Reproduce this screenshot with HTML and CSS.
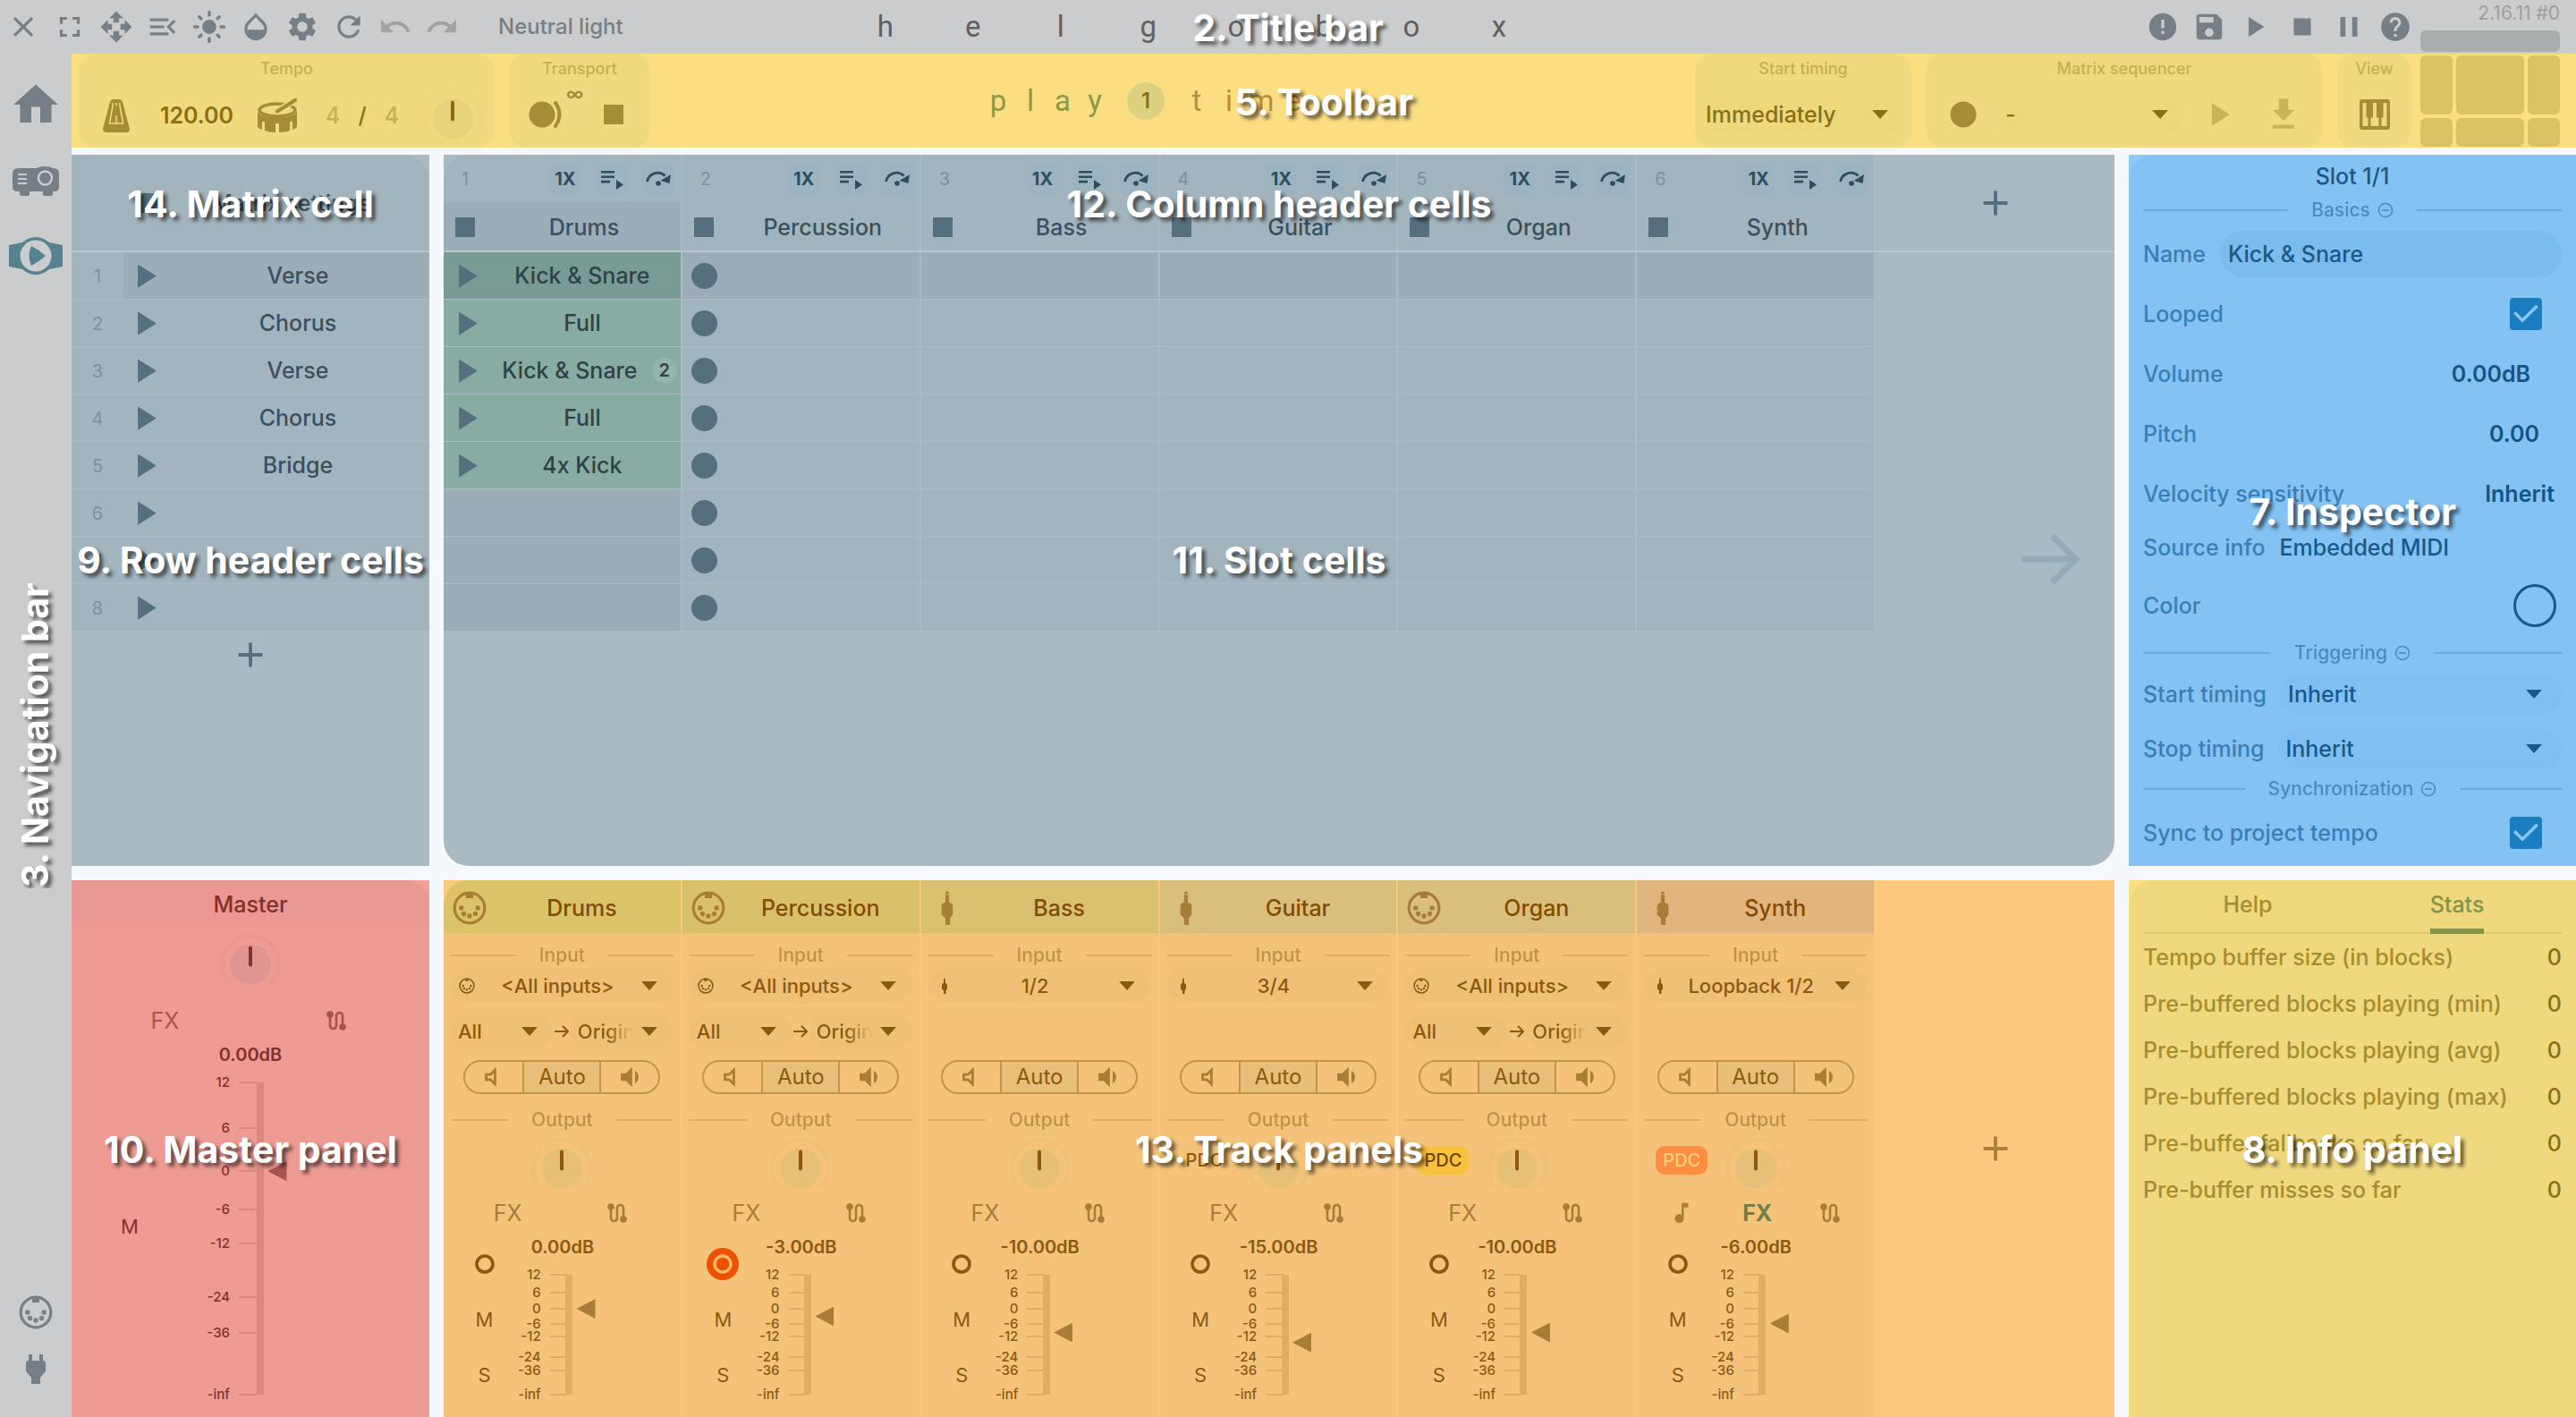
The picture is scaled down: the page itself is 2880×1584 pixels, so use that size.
FILE: index.html
```html
<!DOCTYPE html>
<html lang="en">
<head>
<meta charset="utf-8">
<title>Helgobox – Playtime</title>
<meta name="viewport" content="width=device-width, initial-scale=1">
<link rel="stylesheet" href="styles.css">
</head>
<body>
<svg class="defs" aria-hidden="true">
  <symbol id="i-close" viewBox="0 0 24 24"><path d="M19 6.41L17.59 5 12 10.59 6.41 5 5 6.41 10.59 12 5 17.59 6.41 19 12 13.41 17.59 19 19 17.59 13.41 12z"/></symbol>
  <symbol id="i-full" viewBox="0 0 24 24"><path d="M7 14H5v5h5v-2H7v-3zm-2-4h2V7h3V5H5v5zm12 7h-3v2h5v-5h-2v3zM14 5v2h3v3h2V5h-5z"/></symbol>
  <symbol id="i-move" viewBox="0 0 24 24"><path d="M10 9h4V6h3l-5-5-5 5h3v3zm-1 1H6V7l-5 5 5 5v-3h3v-4zm14 2l-5-5v3h-3v4h3v3l5-5zm-9 3h-4v3H7l5 5 5-5h-3v-3z"/></symbol>
  <symbol id="i-menu" viewBox="0 0 24 24"><path d="M3 18h13v-2H3v2zM3 6v2h13V6H3zm0 7h10v-2H3v2zm18 2.59L17.42 12 21 8.41 19.59 7l-5 5 5 5L21 15.59z"/></symbol>
  <symbol id="i-sun" viewBox="0 0 24 24"><circle cx="12" cy="12" r="5"/><path d="M12 1.6v2.2M12 20.2v2.2M1.6 12h2.2M20.2 12h2.2M4.9 4.9l1.3 1.3M17.8 17.8l1.3 1.3M4.9 19.1l1.3-1.3M17.8 6.2l1.3-1.3" fill="none" stroke="currentColor" stroke-width="2.2" stroke-linecap="round"/></symbol>
  <symbol id="i-drop" viewBox="0 0 24 24"><path d="M17.66 8L12 2.35 6.34 8C4.78 9.56 4 11.64 4 13.64s.78 4.11 2.34 5.67 3.61 2.35 5.66 2.35 4.1-.79 5.66-2.35S20 15.64 20 13.64 19.22 9.56 17.66 8zM6 14c.01-2 .62-3.27 1.76-4.4L12 5.27l4.24 4.38C17.38 10.77 17.99 12 18 14H6z"/></symbol>
  <symbol id="i-gear" viewBox="0 0 24 24"><path d="M19.14 12.94c.04-.3.06-.61.06-.94 0-.32-.02-.64-.07-.94l2.03-1.58c.18-.14.23-.41.12-.61l-1.92-3.32c-.12-.22-.37-.29-.59-.22l-2.39.96c-.5-.38-1.03-.7-1.62-.94l-.36-2.54c-.04-.24-.24-.41-.48-.41h-3.84c-.24 0-.43.17-.47.41l-.36 2.54c-.59.24-1.13.57-1.62.94l-2.39-.96c-.22-.08-.47 0-.59.22L2.74 8.87c-.12.21-.08.47.12.61l2.03 1.58c-.05.3-.09.63-.09.94s.02.64.07.94l-2.03 1.58c-.18.14-.23.41-.12.61l1.92 3.32c.12.22.37.29.59.22l2.39-.96c.5.38 1.03.7 1.62.94l.36 2.54c.05.24.24.41.48.41h3.84c.24 0 .44-.17.47-.41l.36-2.54c.59-.24 1.13-.56 1.62-.94l2.39.96c.22.08.47 0 .59-.22l1.92-3.32c.12-.22.07-.47-.12-.61l-2.01-1.58zM12 15.6c-1.98 0-3.6-1.62-3.6-3.6s1.62-3.6 3.6-3.6 3.6 1.62 3.6 3.6-1.62 3.6-3.6 3.6z"/></symbol>
  <symbol id="i-refresh" viewBox="0 0 24 24"><path d="M17.65 6.35C16.2 4.9 14.21 4 12 4c-4.42 0-7.99 3.58-7.99 8s3.57 8 7.99 8c3.73 0 6.84-2.55 7.73-6h-2.08c-.82 2.33-3.04 4-5.65 4-3.31 0-6-2.69-6-6s2.69-6 6-6c1.66 0 3.14.69 4.22 1.78L13 11h7V4l-2.35 2.35z"/></symbol>
  <symbol id="i-undo" viewBox="0 0 24 24"><path d="M12.5 8c-2.65 0-5.05.99-6.9 2.6L2 7v9h9l-3.62-3.62c1.39-1.16 3.16-1.88 5.12-1.88 3.54 0 6.55 2.31 7.6 5.5l2.37-.78C21.08 11.03 17.15 8 12.5 8z"/></symbol>
  <symbol id="i-redo" viewBox="0 0 24 24"><path d="M18.4 10.6C16.55 8.99 14.15 8 11.5 8c-4.65 0-8.58 3.03-9.96 7.22L3.9 16c1.05-3.19 4.05-5.5 7.6-5.5 1.95 0 3.73.72 5.12 1.88L13 16h9V7l-3.6 3.6z"/></symbol>
  <symbol id="i-alert" viewBox="0 0 24 24"><path d="M12 2.400C6.700 2.400 2.400 6.700 2.400 12s4.300 9.600 9.600 9.600 9.600-4.300 9.600-9.600S17.300 2.400 12 2.400zm1 14.600h-2v-2h2v2zm0-4h-2V7h2v6z"/></symbol>
  <symbol id="i-save" viewBox="0 0 24 24"><path d="M17 3H5c-1.110 0-2 .9-2 2v14c0 1.100.890 2 2 2h14c1.100 0 2-.9 2-2V7l-4-4zm-5 16c-1.660 0-3-1.340-3-3s1.340-3 3-3 3 1.340 3 3-1.340 3-3 3zm3-10H5V5h10v4z"/></symbol>
  <symbol id="i-play" viewBox="0 0 24 24"><path d="M7 5v14l11-7z"/></symbol>
  <symbol id="i-stop" viewBox="0 0 24 24"><path d="M6 6h12v12H6z"/></symbol>
  <symbol id="i-pause" viewBox="0 0 24 24"><path d="M6 5h3.600v14H6zM14.400 5H18v14h-3.600z"/></symbol>
  <symbol id="i-help" viewBox="0 0 24 24"><path d="M12 2C6.480 2 2 6.480 2 12s4.480 10 10 10 10-4.480 10-10S17.520 2 12 2zm1 17h-2v-2h2v2zm2.070-7.750l-.9.920C13.450 12.900 13 13.500 13 15h-2v-.5c0-1.100.450-2.100 1.170-2.830l1.240-1.260c.370-.360.590-.860.590-1.410 0-1.100-.9-2-2-2s-2 .9-2 2H8c0-2.210 1.790-4 4-4s4 1.790 4 4c0 .880-.360 1.680-.930 2.250z"/></symbol>
  <symbol id="i-home" viewBox="0 0 24 24"><path d="M10 20v-7h4v7h5v-8h3L12 3 2 12h3v8z"/></symbol>
  <symbol id="i-projector" viewBox="0 0 52 34"><path d="M6 2H27Q30 0 36 0Q42 0 45 2H47Q52 3 52 8V23Q52 28 47 28H45V31Q45 33 43 33H36Q34 33 34 31V28H19V31Q19 33 17 33H10Q8 33 8 31V28H5Q0 28 0 23V8Q0 2 6 2z"/><circle cx="36.500" cy="13" r="7.500" fill="none" stroke="var(--bg)" stroke-width="2.400"/><path d="M6 9h10M6 14h10M6 19h10" stroke="var(--bg)" stroke-width="2.200"/></symbol>
  <symbol id="i-playtime" viewBox="0 0 60 42"><path d="M0 9L15 6Q22 0 30 0T45 6L60 9V33L45 36Q38 42 30 42T15 36L0 33z"/><circle cx="30" cy="21" r="17.500" fill="var(--bg)"/><path d="M25 10Q33 14 41 21Q33 28 25 32Q20 21 25 10z"/></symbol>
  <symbol id="i-midi" viewBox="0 0 38 38"><circle cx="19" cy="19" r="16.800" fill="none" stroke="currentColor" stroke-width="3.200"/><path d="M15 2.500h8v5.500h-8z"/><circle cx="9.800" cy="19" r="2.700"/><circle cx="28.200" cy="19" r="2.700"/><circle cx="12.500" cy="25.500" r="2.700"/><circle cx="25.500" cy="25.500" r="2.700"/><circle cx="19" cy="28" r="2.700"/></symbol>
  <symbol id="i-plug" viewBox="0 0 24 34"><path d="M4 0h4v7h8V0h4v7q3 0 3 3v9l-6 7v7H7v-7l-6-7v-9q0-3 3-3z"/></symbol>
  <symbol id="i-jack" viewBox="0 0 12 36"><path d="M6 0l2 2v1H4V2zM4 4h4v8q4 1 4 4v9l-3 4v7H4v-7l-4-4v-9q0-3 4-4z"/></symbol>
  <symbol id="i-metronome" viewBox="0 0 30 37"><path d="M8 3Q9 0 12 0h6q3 0 4 3l8 30q0 4-4 4H4q-4 0-4-4z"/><path d="M11.500 4L7.500 27h15L18.500 4M15 4v3M15 18v9" fill="none" stroke="var(--bg)" stroke-width="1.500"/></symbol>
  <symbol id="i-drum" viewBox="0 0 44 38"><path d="M0 13q0 8 22 8t22-8v19q0 1-5 3v-9h-3v10q-5 2-12 2v-10h-4v10q-7 0-12-2V26H5v9q-5-2-5-3z"/><ellipse cx="22" cy="13" rx="20" ry="7" fill="none" stroke="currentColor" stroke-width="3.500"/><path d="M24 13L42 2" stroke="var(--bg)" stroke-width="7"/><path d="M22 14.500L42 2" stroke="currentColor" stroke-width="4.400" stroke-linecap="round"/></symbol>
  <symbol id="i-knob" viewBox="0 0 72 72"><path d="M13.400 62.600a32 32 0 1 1 45.200 0" fill="none" stroke="var(--ring)" stroke-width="4"/><circle cx="36" cy="40" r="22.500" fill="var(--disc)"/><path d="M36 21.500v19" stroke="var(--needle)" stroke-width="4" stroke-linecap="round"/></symbol>
  <symbol id="i-recplay" viewBox="0 0 42 32"><circle cx="15" cy="16" r="14.500"/><path d="M30 3q9 13 0 26" fill="none" stroke="currentColor" stroke-width="4" stroke-linecap="round"/></symbol>
  <symbol id="i-dot" viewBox="0 0 30 30"><circle cx="15" cy="15" r="14.500"/></symbol>
  <symbol id="i-down" viewBox="0 0 24 24"><path d="M19 9h-4V2H9v7H5l7 7 7-7zM5 18.500v2.500h14v-2.500z"/></symbol>
  <symbol id="i-piano" viewBox="0 0 34 34"><path fill-rule="evenodd" d="M3 0h28q3 0 3 3v28q0 3-3 3H3q-3 0-3-3V3q0-3 3-3zM3.500 4v26h6V20.500H7.500V4zM12.500 30h9V20.500h-2.500V4h-4v16.500h-2.500zM24.500 30h6V4h-4v16.500h-2z"/></symbol>
  <symbol id="i-queue" viewBox="0 0 28 28"><path d="M2 5h15v2.600H2zM2 10.400h15V13H2zM2 15.800h10v2.600H2zM19 15v11l8-5.500z"/></symbol>
  <symbol id="i-step" viewBox="0 0 28 28"><path d="M1.500 17a12 12 0 0 1 20-6.500" fill="none" stroke="currentColor" stroke-width="2.800"/><path d="M28 9l-1.500 10L16.500 16z"/><circle cx="14" cy="19" r="2.800"/></symbol>
  <symbol id="i-add" viewBox="0 0 24 24"><path d="M19 13h-6v6h-2v-6H5v-2h6V5h2v6h6v2z"/></symbol>
  <symbol id="i-arrow" viewBox="0 0 66 58"><path d="M0 29h60M34 3l27 26-27 26" fill="none" stroke="currentColor" stroke-width="7"/></symbol>
  <symbol id="i-to" viewBox="0 0 16 14"><path d="M0 7h14M9 1l6 6-6 6" fill="none" stroke="currentColor" stroke-width="2"/></symbol>
  <symbol id="i-caret" viewBox="0 0 16 9"><path d="M0 0h16L8 9z"/></symbol>
  <symbol id="i-minus" viewBox="0 0 18 18"><circle cx="9" cy="9" r="7.500" fill="none" stroke="currentColor" stroke-width="1.600"/><path d="M5 8.200h8v1.600H5z"/></symbol>
  <symbol id="i-mute" viewBox="0 0 24 24"><path d="M5 9v6h4l5 5V4L9 9H5zm7-.17v6.340L9.830 13H7v-2h2.830L12 8.830z"/></symbol>
  <symbol id="i-vol" viewBox="0 0 24 24"><path d="M19 12c0-2.300-1.020-4-2.800-5v10c1.780-1 2.800-2.700 2.800-5zM5 9v6h4l5 5V4L9 9H5z"/></symbol>
  <symbol id="i-route" viewBox="0 0 22 22"><path d="M4 4v12.500a3.500 3.500 0 0 0 7 0v-11a3.500 3.500 0 0 1 7 0V18" fill="none" stroke="currentColor" stroke-width="2.600"/><circle cx="4" cy="4" r="3.800"/><circle cx="18" cy="18" r="3.800"/></symbol>
  <symbol id="i-note" viewBox="0 0 24 24"><path d="M12 3v10.550c-.590-.340-1.270-.550-2-.550-2.210 0-4 1.790-4 4s1.790 4 4 4 4-1.790 4-4V7h4V3h-6z"/></symbol>
  <symbol id="i-arm" viewBox="0 0 36 36"><circle cx="18" cy="18" r="9" fill="none" stroke="currentColor" stroke-width="3.600"/></symbol>
  <symbol id="i-armed" viewBox="0 0 36 36"><circle cx="18" cy="18" r="18" fill="#ed5103"/><circle cx="18" cy="18" r="9" fill="none" stroke="#fcb862" stroke-width="3.400"/></symbol>
</svg>

<header class="titlebar">
  <div class="tools">
    <button aria-label="Close"><svg><use href="#i-close"/></svg></button>
    <button aria-label="Full screen"><svg><use href="#i-full"/></svg></button>
    <button aria-label="Move"><svg><use href="#i-move"/></svg></button>
    <button aria-label="Menu"><svg><use href="#i-menu"/></svg></button>
    <button aria-label="Brightness"><svg><use href="#i-sun"/></svg></button>
    <button aria-label="Opacity"><svg><use href="#i-drop"/></svg></button>
    <button aria-label="Settings"><svg><use href="#i-gear"/></svg></button>
    <button aria-label="Refresh"><svg><use href="#i-refresh"/></svg></button>
    <button aria-label="Undo" class="off"><svg><use href="#i-undo"/></svg></button>
    <button aria-label="Redo" class="off"><svg><use href="#i-redo"/></svg></button>
  </div>
  <span class="theme">Neutral light</span>
  <h1 class="wordmark"><span>h</span><span>e</span><span>l</span><span>g</span><span>o</span><span>b</span><span>o</span><span>x</span></h1>
  <div class="tools">
    <button aria-label="Alerts"><svg><use href="#i-alert"/></svg></button>
    <button aria-label="Save"><svg><use href="#i-save"/></svg></button>
    <button aria-label="Play"><svg><use href="#i-play"/></svg></button>
    <button aria-label="Stop"><svg><use href="#i-stop"/></svg></button>
    <button aria-label="Pause"><svg><use href="#i-pause"/></svg></button>
    <button aria-label="Help"><svg><use href="#i-help"/></svg></button>
  </div>
  <div class="version"><span>2.16.11 #0</span><i></i></div>
  <strong class="tag">2. Title bar</strong>
</header>

<div class="shell">
<nav class="nav">
  <a href="#home" aria-label="Home"><svg class="w60"><use href="#i-home"/></svg></a>
  <a href="#projector" aria-label="Projection"><svg class="w52"><use href="#i-projector"/></svg></a>
  <a href="#playtime" aria-label="Playtime" class="current"><svg class="w60 h42"><use href="#i-playtime"/></svg></a>
  <a href="#midi" aria-label="MIDI" class="push"><svg class="w38"><use href="#i-midi"/></svg></a>
  <a href="#plug" aria-label="Plug-ins"><svg class="w24"><use href="#i-plug"/></svg></a>
  <strong class="tag side">3. Navigation bar</strong>
</nav>

<main class="main">
<section class="toolbar">
  <div class="group"><h2>Tempo</h2>
    <div class="tempo">
      <button aria-label="Metronome"><svg class="metro"><use href="#i-metronome"/></svg></button>
      <b>120.00</b>
      <button aria-label="Count-in"><svg class="drum"><use href="#i-drum"/></svg></button>
      <span class="dim">4</span><span>/</span><span class="dim">4</span>
      <svg class="knob" role="img" aria-label="Tempo knob"><use href="#i-knob"/></svg>
    </div>
  </div>
  <div class="group"><h2>Transport</h2>
    <div class="transport">
      <button aria-label="Record"><svg class="recplay"><use href="#i-recplay"/></svg></button>
      <span class="inf">∞</span>
      <button aria-label="Stop"><i class="square"></i></button>
    </div>
  </div>
  <div class="playmark"><span>p</span><span>l</span><span>a</span><span>y</span><b>1</b><span class="t">t</span><span class="t">i</span><span class="t">m</span><span class="t">e</span></div>
  <div class="group timing"><h2>Start timing</h2>
    <div class="ctl"><label class="sel"><select aria-label="Start timing"><option>Immediately</option></select><svg><use href="#i-caret"/></svg></label></div>
  </div>
  <div class="group seq"><h2>Matrix sequencer</h2>
    <div class="ctl">
      <button aria-label="Record sequence"><svg class="dot"><use href="#i-dot"/></svg></button>
      <label class="sel"><select aria-label="Sequence"><option>-</option></select><svg><use href="#i-caret"/></svg></label>
      <button aria-label="Play sequence" class="faint"><svg class="w44"><use href="#i-play"/></svg></button>
      <button aria-label="Export" class="faint"><svg class="w40"><use href="#i-down"/></svg></button>
    </div>
  </div>
  <div class="group view"><h2>View</h2>
    <div class="ctl"><button aria-label="Piano"><svg class="w34"><use href="#i-piano"/></svg></button></div>
  </div>
  <div class="minimap"><i></i><i></i><i></i><i></i><i></i><i></i></div>
  <strong class="tag">5. Toolbar</strong>
</section>

<div class="deck">
<section class="rows">
  <div class="corner">
    <div class="cellbar"><button aria-label="Stop all"><i class="square"></i></button><span>Matrix settings</span></div>
    <strong class="tag">14. Matrix cell</strong>
  </div>
  <div class="rowlist">
    <div class="row on"><em>1</em><div><svg><use href="#i-play"/></svg><span>Verse</span></div></div>
    <div class="row"><em>2</em><div><svg><use href="#i-play"/></svg><span>Chorus</span></div></div>
    <div class="row"><em>3</em><div><svg><use href="#i-play"/></svg><span>Verse</span></div></div>
    <div class="row"><em>4</em><div><svg><use href="#i-play"/></svg><span>Chorus</span></div></div>
    <div class="row"><em>5</em><div><svg><use href="#i-play"/></svg><span>Bridge</span></div></div>
    <div class="row"><em>6</em><div><svg><use href="#i-play"/></svg></div></div>
    <div class="row"><em>7</em><div><svg><use href="#i-play"/></svg></div></div>
    <div class="row"><em>8</em><div><svg><use href="#i-play"/></svg></div></div>
    <button class="add" aria-label="Add row"><svg><use href="#i-add"/></svg></button>
    <strong class="tag">9. Row header cells</strong>
  </div>
</section>

<section class="matrix">
  <div class="cols">
    <div class="col on"><div class="top"><em>1</em><button>1X</button><button aria-label="Queue"><svg><use href="#i-queue"/></svg></button><button aria-label="Step"><svg><use href="#i-step"/></svg></button></div><div class="name"><i class="square"></i><span>Drums</span></div></div>
    <div class="col"><div class="top"><em>2</em><button>1X</button><button aria-label="Queue"><svg><use href="#i-queue"/></svg></button><button aria-label="Step"><svg><use href="#i-step"/></svg></button></div><div class="name"><i class="square"></i><span>Percussion</span></div></div>
    <div class="col"><div class="top"><em>3</em><button>1X</button><button aria-label="Queue"><svg><use href="#i-queue"/></svg></button><button aria-label="Step"><svg><use href="#i-step"/></svg></button></div><div class="name"><i class="square"></i><span>Bass</span></div></div>
    <div class="col"><div class="top"><em>4</em><button>1X</button><button aria-label="Queue"><svg><use href="#i-queue"/></svg></button><button aria-label="Step"><svg><use href="#i-step"/></svg></button></div><div class="name"><i class="square"></i><span>Guitar</span></div></div>
    <div class="col"><div class="top"><em>5</em><button>1X</button><button aria-label="Queue"><svg><use href="#i-queue"/></svg></button><button aria-label="Step"><svg><use href="#i-step"/></svg></button></div><div class="name"><i class="square"></i><span>Organ</span></div></div>
    <div class="col"><div class="top"><em>6</em><button>1X</button><button aria-label="Queue"><svg><use href="#i-queue"/></svg></button><button aria-label="Step"><svg><use href="#i-step"/></svg></button></div><div class="name"><i class="square"></i><span>Synth</span></div></div>
    <button class="add" aria-label="Add column"><svg><use href="#i-add"/></svg></button>
    <strong class="tag">12. Column header cells</strong>
  </div>
  <div class="slots">
    <div class="line on"><div class="clip"><svg><use href="#i-play"/></svg><span>Kick &amp; Snare</span></div><div><i class="disc"></i></div><div></div><div></div><div></div><div></div></div>
    <div class="line"><div class="clip"><svg><use href="#i-play"/></svg><span>Full</span></div><div><i class="disc"></i></div><div></div><div></div><div></div><div></div></div>
    <div class="line"><div class="clip"><svg><use href="#i-play"/></svg><span>Kick &amp; Snare</span><b>2</b></div><div><i class="disc"></i></div><div></div><div></div><div></div><div></div></div>
    <div class="line"><div class="clip"><svg><use href="#i-play"/></svg><span>Full</span></div><div><i class="disc"></i></div><div></div><div></div><div></div><div></div></div>
    <div class="line"><div class="clip"><svg><use href="#i-play"/></svg><span>4x Kick</span></div><div><i class="disc"></i></div><div></div><div></div><div></div><div></div></div>
    <div class="line"><div class="void"></div><div><i class="disc"></i></div><div></div><div></div><div></div><div></div></div>
    <div class="line"><div class="void"></div><div><i class="disc"></i></div><div></div><div></div><div></div><div></div></div>
    <div class="line"><div class="void"></div><div><i class="disc"></i></div><div></div><div></div><div></div><div></div></div>
    <svg class="hint"><use href="#i-arrow"/></svg>
    <strong class="tag">11. Slot cells</strong>
  </div>
</section>

<section class="inspector">
  <div class="sheet">
  <h2>Slot 1/1</h2>
  <h3 class="rule"><span>Basics <svg><use href="#i-minus"/></svg></span></h3>
  <div class="field"><label for="name">Name</label><input id="name" type="text" value="Kick &amp; Snare"></div>
  <div class="field"><label for="looped">Looped</label><input id="looped" type="checkbox" checked></div>
  <div class="field"><span>Volume</span><b class="far">0.00dB</b></div>
  <div class="field"><span>Pitch</span><b class="mid">0.00</b></div>
  <div class="field"><span>Velocity sensitivity</span><b>Inherit</b></div>
  <div class="field low"><span>Source info</span><output>Embedded MIDI</output></div>
  <div class="field tall"><span>Color</span><button class="swatch" aria-label="Color"></button></div>
  <h3 class="rule"><span>Triggering <svg><use href="#i-minus"/></svg></span></h3>
  <div class="field list"><label for="start">Start timing</label><div class="sel"><select id="start"><option>Inherit</option></select><svg><use href="#i-caret"/></svg></div></div>
  <div class="field list"><label for="stop">Stop timing</label><div class="sel"><select id="stop"><option>Inherit</option></select><svg><use href="#i-caret"/></svg></div></div>
  <h3 class="rule"><span>Synchronization <svg><use href="#i-minus"/></svg></span></h3>
  <div class="field"><label for="sync">Sync to project tempo</label><input id="sync" type="checkbox" checked></div>
  </div>
  <strong class="tag">7. Inspector</strong>
</section>
</div>

<div class="deck mixer">
<section class="master">
  <h2>Master</h2>
  <svg class="knob" role="img" aria-label="Pan"><use href="#i-knob"/></svg>
  <div class="fx"><button>FX</button><button aria-label="Routing"><svg><use href="#i-route"/></svg></button></div>
  <div class="db">0.00dB</div>
  <div class="strip">
    <div class="keys"><button>M</button></div>
    <ul class="scale"><li>12</li><li>6</li><li>0</li><li>-6</li><li>-12</li><li>-24</li><li>-36</li><li>-inf</li></ul>
    <input type="range" aria-label="Master volume" step="any" value="71.6">
  </div>
  <strong class="tag">10. Master panel</strong>
</section>

<section class="tracks">
  <article class="track c1"><h2><svg class="plug"><use href="#i-midi"/></svg><span>Drums</span></h2>
    <h3 class="rule"><span>Input</span></h3>
    <label class="sel src"><svg class="k"><use href="#i-midi"/></svg><select aria-label="Drums input"><option>&lt;All inputs&gt;</option></select><svg><use href="#i-caret"/></svg></label>
    <div class="chan"><label class="sel"><select aria-label="Drums channel"><option>All</option></select><svg><use href="#i-caret"/></svg></label><svg class="to"><use href="#i-to"/></svg><label class="sel cut"><select aria-label="Drums target"><option>Original</option></select><svg><use href="#i-caret"/></svg></label></div>
    <div class="mon"><button aria-label="Monitor off"><svg><use href="#i-mute"/></svg></button><button class="on">Auto</button><button aria-label="Monitor on"><svg><use href="#i-vol"/></svg></button></div>
    <h3 class="rule"><span>Output</span></h3>
    <div class="pan"><svg class="knob"><use href="#i-knob"/></svg></div>
    <div class="fx"><button>FX</button><button aria-label="Routing"><svg><use href="#i-route"/></svg></button></div>
    <div class="strip"><div class="keys"><button aria-label="Arm"><svg><use href="#i-arm"/></svg></button><button>M</button><button>S</button></div>
    <div class="db">0.00dB</div><ul class="scale"><li>12</li><li>6</li><li>0</li><li>-6</li><li>-12</li><li>-24</li><li>-36</li><li>-inf</li></ul><input type="range" aria-label="Drums volume" step="any" value="71.6"></div>
  </article>
  <article class="track c2"><h2><svg class="plug"><use href="#i-midi"/></svg><span>Percussion</span></h2>
    <h3 class="rule"><span>Input</span></h3>
    <label class="sel src"><svg class="k"><use href="#i-midi"/></svg><select aria-label="Percussion input"><option>&lt;All inputs&gt;</option></select><svg><use href="#i-caret"/></svg></label>
    <div class="chan"><label class="sel"><select aria-label="Percussion channel"><option>All</option></select><svg><use href="#i-caret"/></svg></label><svg class="to"><use href="#i-to"/></svg><label class="sel cut"><select aria-label="Percussion target"><option>Original</option></select><svg><use href="#i-caret"/></svg></label></div>
    <div class="mon"><button aria-label="Monitor off"><svg><use href="#i-mute"/></svg></button><button class="on">Auto</button><button aria-label="Monitor on"><svg><use href="#i-vol"/></svg></button></div>
    <h3 class="rule"><span>Output</span></h3>
    <div class="pan"><svg class="knob"><use href="#i-knob"/></svg></div>
    <div class="fx"><button>FX</button><button aria-label="Routing"><svg><use href="#i-route"/></svg></button></div>
    <div class="strip"><div class="keys"><button aria-label="Disarm"><svg><use href="#i-armed"/></svg></button><button>M</button><button>S</button></div>
    <div class="db">-3.00dB</div><ul class="scale"><li>12</li><li>6</li><li>0</li><li>-6</li><li>-12</li><li>-24</li><li>-36</li><li>-inf</li></ul><input type="range" aria-label="Percussion volume" step="any" value="65.4"></div>
  </article>
  <article class="track c3"><h2><svg class="plug"><use href="#i-jack"/></svg><span>Bass</span></h2>
    <h3 class="rule"><span>Input</span></h3>
    <label class="sel src"><svg class="k"><use href="#i-jack"/></svg><select aria-label="Bass input"><option>1/2</option></select><svg><use href="#i-caret"/></svg></label>
    <div class="chan"></div>
    <div class="mon"><button aria-label="Monitor off"><svg><use href="#i-mute"/></svg></button><button class="on">Auto</button><button aria-label="Monitor on"><svg><use href="#i-vol"/></svg></button></div>
    <h3 class="rule"><span>Output</span></h3>
    <div class="pan"><svg class="knob"><use href="#i-knob"/></svg></div>
    <div class="fx"><button>FX</button><button aria-label="Routing"><svg><use href="#i-route"/></svg></button></div>
    <div class="strip"><div class="keys"><button aria-label="Arm"><svg><use href="#i-arm"/></svg></button><button>M</button><button>S</button></div>
    <div class="db">-10.00dB</div><ul class="scale"><li>12</li><li>6</li><li>0</li><li>-6</li><li>-12</li><li>-24</li><li>-36</li><li>-inf</li></ul><input type="range" aria-label="Bass volume" step="any" value="51.8"></div>
  </article>
  <article class="track c4"><h2><svg class="plug"><use href="#i-jack"/></svg><span>Guitar</span></h2>
    <h3 class="rule"><span>Input</span></h3>
    <label class="sel src"><svg class="k"><use href="#i-jack"/></svg><select aria-label="Guitar input"><option>3/4</option></select><svg><use href="#i-caret"/></svg></label>
    <div class="chan"></div>
    <div class="mon"><button aria-label="Monitor off"><svg><use href="#i-mute"/></svg></button><button class="on">Auto</button><button aria-label="Monitor on"><svg><use href="#i-vol"/></svg></button></div>
    <h3 class="rule"><span>Output</span></h3>
    <div class="pan"><button class="pdc">PDC</button><svg class="knob"><use href="#i-knob"/></svg></div>
    <div class="fx"><button>FX</button><button aria-label="Routing"><svg><use href="#i-route"/></svg></button></div>
    <div class="strip"><div class="keys"><button aria-label="Arm"><svg><use href="#i-arm"/></svg></button><button>M</button><button>S</button></div>
    <div class="db">-15.00dB</div><ul class="scale"><li>12</li><li>6</li><li>0</li><li>-6</li><li>-12</li><li>-24</li><li>-36</li><li>-inf</li></ul><input type="range" aria-label="Guitar volume" step="any" value="43.5"></div>
  </article>
  <article class="track c5"><h2><svg class="plug"><use href="#i-midi"/></svg><span>Organ</span></h2>
    <h3 class="rule"><span>Input</span></h3>
    <label class="sel src"><svg class="k"><use href="#i-midi"/></svg><select aria-label="Organ input"><option>&lt;All inputs&gt;</option></select><svg><use href="#i-caret"/></svg></label>
    <div class="chan"><label class="sel"><select aria-label="Organ channel"><option>All</option></select><svg><use href="#i-caret"/></svg></label><svg class="to"><use href="#i-to"/></svg><label class="sel cut"><select aria-label="Organ target"><option>Original</option></select><svg><use href="#i-caret"/></svg></label></div>
    <div class="mon"><button aria-label="Monitor off"><svg><use href="#i-mute"/></svg></button><button class="on">Auto</button><button aria-label="Monitor on"><svg><use href="#i-vol"/></svg></button></div>
    <h3 class="rule"><span>Output</span></h3>
    <div class="pan"><button class="pdc warn">PDC</button><svg class="knob"><use href="#i-knob"/></svg></div>
    <div class="fx"><button>FX</button><button aria-label="Routing"><svg><use href="#i-route"/></svg></button></div>
    <div class="strip"><div class="keys"><button aria-label="Arm"><svg><use href="#i-arm"/></svg></button><button>M</button><button>S</button></div>
    <div class="db">-10.00dB</div><ul class="scale"><li>12</li><li>6</li><li>0</li><li>-6</li><li>-12</li><li>-24</li><li>-36</li><li>-inf</li></ul><input type="range" aria-label="Organ volume" step="any" value="51.8"></div>
  </article>
  <article class="track c6"><h2><svg class="plug"><use href="#i-jack"/></svg><span>Synth</span></h2>
    <h3 class="rule"><span>Input</span></h3>
    <label class="sel src"><svg class="k"><use href="#i-jack"/></svg><select aria-label="Synth input"><option>Loopback 1/2</option></select><svg><use href="#i-caret"/></svg></label>
    <div class="chan"></div>
    <div class="mon"><button aria-label="Monitor off"><svg><use href="#i-mute"/></svg></button><button class="on">Auto</button><button aria-label="Monitor on"><svg><use href="#i-vol"/></svg></button></div>
    <h3 class="rule"><span>Output</span></h3>
    <div class="pan"><button class="pdc alert">PDC</button><svg class="knob"><use href="#i-knob"/></svg></div>
    <div class="fx"><button aria-label="Instrument"><svg class="note"><use href="#i-note"/></svg></button><button class="live">FX</button><button aria-label="Routing"><svg><use href="#i-route"/></svg></button></div>
    <div class="strip"><div class="keys"><button aria-label="Arm"><svg><use href="#i-arm"/></svg></button><button>M</button><button>S</button></div>
    <div class="db">-6.00dB</div><ul class="scale"><li>12</li><li>6</li><li>0</li><li>-6</li><li>-12</li><li>-24</li><li>-36</li><li>-inf</li></ul><input type="range" aria-label="Synth volume" step="any" value="59.3"></div>
  </article>
  <button class="add" aria-label="Add track"><svg><use href="#i-add"/></svg></button>
  <strong class="tag">13. Track panels</strong>
</section>

<section class="info">
  <div class="card">
  <div class="tabs"><button>Help</button><button class="on">Stats</button></div>
  <table>
    <tr><th>Tempo buffer size (in blocks)</th><td>0</td></tr>
    <tr><th>Pre-buffered blocks playing (min)</th><td>0</td></tr>
    <tr><th>Pre-buffered blocks playing (avg)</th><td>0</td></tr>
    <tr><th>Pre-buffered blocks playing (max)</th><td>0</td></tr>
    <tr><th>Pre-buffer fallbacks so far</th><td>0</td></tr>
    <tr><th>Pre-buffer misses so far</th><td>0</td></tr>
  </table>
  </div>
  <strong class="tag">8. Info panel</strong>
</section>
</div>
</main>
</div>
</body>
</html>
```
FILE: styles.css
```css
* { box-sizing: border-box; margin: 0; padding: 0; }

body {
  display: flex;
  flex-direction: column;
  min-height: 100vh;
  background: #f5f9fe;
  font: 500 25px/28px Inter, "Liberation Sans", sans-serif;
}

button, select, input { font: inherit; color: inherit; background: none; border: 0; appearance: none; }
button { display: flex; align-items: center; justify-content: center; }
svg { display: block; flex: none; fill: currentColor; }
a { color: inherit; }
em, i { font-style: normal; }
i { display: block; }
h1, h2, h3 { font: inherit; }
.defs { display: none; }

/* big captions that lie over each region */
.tag {
  position: absolute;
  inset: 0;
  z-index: 2;
  display: flex;
  align-items: center;
  justify-content: center;
  padding-top: 2px;
  pointer-events: none;
  color: #fff;
  font-size: 41px;
  font-weight: 700;
  line-height: 48px;
  white-space: nowrap;
  text-shadow: 4px 4px 4px rgba(0, 0, 0, .6);
}
.tag.side {
  padding: 0 0 0 2px;
  writing-mode: vertical-rl;
  transform: rotate(180deg);
  text-shadow: -4px 4px 4px rgba(0, 0, 0, .6);
}

/* title bar */
.titlebar {
  position: relative;
  display: flex;
  align-items: center;
  height: 60px;
  padding: 0 18px 0 7px;
  background: #cbccce;
  color: #777f86;
}
.tools { display: flex; gap: 14px; }
.tools svg { width: 38px; height: 38px; }
.off { color: #a0a2a4; }
.theme { margin-left: 44px; font-size: 24px; }
.wordmark {
  display: flex;
  flex: 1;
  justify-content: center;
  padding-right: 430px;
  color: #5f6062;
  font: 400 33px/40px Roboto, sans-serif;
}
.wordmark span { width: 98px; text-align: center; }
.version { width: 165px; color: #9da0a2; font-size: 21px; font-weight: 400; line-height: 26px; text-align: right; }
.version span { display: block; height: 32px; }
.version i { height: 24px; margin-left: 9px; border-radius: 6px; background: #a9adae; }

.shell { display: flex; flex: 1; }

/* navigation */
.nav {
  --bg: #cbccce;
  position: relative;
  display: flex;
  flex-direction: column;
  align-items: center;
  width: 80px;
  padding: 27px 0 36px;
  background: var(--bg);
  color: #777f86;
}
.nav a { display: flex; }
.w60 { width: 60px; height: 60px; }
.w60.h42 { height: 42px; }
.w52 { width: 52px; height: 34px; margin: 39px 0 45px; }
.w38 { width: 38px; height: 38px; margin-bottom: 28px; }
.w24 { width: 24px; height: 34px; }
.w34 { width: 34px; height: 34px; }
.w40 { width: 42px; height: 42px; }
.w44 { width: 44px; height: 44px; }
.current { color: #578290; }
.push { margin-top: auto; }

.main { display: flex; flex: 1; flex-direction: column; min-width: 0; }

/* selects */
.sel { display: grid; grid-template-columns: minmax(0, 1fr) 40px; align-items: center; border-radius: 22px; }
.sel select { grid-row: 1; grid-column: 1 / 3; width: 100%; height: 100%; padding-left: 8px; }
.sel > svg:last-child { grid-row: 1; grid-column: 2; width: 18px; height: 10px; pointer-events: none; }

/* toolbar */
.toolbar {
  --bg: #f0d97e;
  --ring: #eed77c;
  --disc: #e6d37c;
  --needle: #8d6c0f;
  position: relative;
  display: flex;
  gap: 16px;
  height: 105px;
  margin-bottom: 8px;
  padding: 0 18px 0 8px;
  background: #fbdd82;
  color: #a68c36;
}
.group { border-radius: 20px; background: var(--bg); }
.group h2 { height: 33px; color: #c8af50; font-size: 18px; line-height: 34px; text-align: center; }
.knob { width: 72px; height: 72px; }
.tempo { display: grid; grid-template-columns: 84px 96px 84px 40px 26px 40px 95px; align-items: center; justify-items: center; height: 70px; color: #8a7014; }
.tempo b { font-weight: 600; }
.tempo button { color: #a68c36; }
.tempo .dim { color: #c8af50; }
.metro { width: 30px; height: 37px; }
.drum { width: 44px; height: 38px; }
.transport { display: flex; align-items: center; height: 70px; padding: 0 30px 0 22px; }
.recplay { width: 42px; height: 32px; }
.inf { align-self: flex-start; width: 20px; height: 24px; font-size: 20px; line-height: 24px; font-weight: 600; }
.square { width: 22px; height: 22px; background: currentColor; }
.transport .square { margin-left: 22px; }
.playmark { display: flex; flex: 1; align-items: center; justify-content: center; padding-right: 60px; color: #8a9a4a; font: 400 33px/40px Roboto, sans-serif; }
.playmark span { width: 36px; text-align: center; }
.playmark .t { color: #b58f3c; }
.playmark b { width: 42px; height: 42px; margin: 0 18px; border-radius: 50%; background: #dbd17f; color: #8a7014; font: 600 24px/42px Inter, sans-serif; text-align: center; }
.ctl { display: flex; align-items: center; height: 70px; }
.ctl .sel { height: 44px; background: #efd77b; color: #8a7014; }
.timing { width: 242px; padding: 0 8px; }
.timing .sel { flex: 1; }
.timing .sel select { padding-left: 4px; }
.timing .sel, .seq .sel { grid-template-columns: minmax(0, 1fr) 36px; }
.seq { width: 444px; padding-left: 27px; }
.seq h2 { margin-left: -27px; }
.seq .sel { width: 208px; margin: 0 9px 0 24px; }
.dot { width: 30px; height: 30px; }
.faint { margin-left: 9px; color: #cbb456; }
.faint + .faint { margin-left: 28px; }
.view { width: 83px; }
.view .ctl { justify-content: center; }
.minimap { display: grid; grid-template: 66px 32px / 36px 76px 36px; gap: 4px; margin-left: -6px; padding-top: 2px; }
.minimap i { border-radius: 6px; background: #dbc264; }

/* three-panel rows */
.deck { display: grid; grid-template-columns: 400px minmax(0, 1fr) 500px; gap: 16px; height: 795px; margin-bottom: 16px; }
.deck.mixer { flex: 1; height: auto; margin: 0; }

.rows, .matrix { display: flex; flex-direction: column; background: #a9bac3; color: #3c4f5a; }
.corner, .cols { position: relative; height: 109px; border-bottom: 2px solid #b7c7cf; }
.cellbar { display: flex; align-items: center; height: 100%; padding-left: 77px; border-radius: 0 28px 0 0; background: #a2b5bf; }
.cellbar span { margin-left: 58px; }
.square, .disc { flex: none; }
.cellbar .square, .name .square, .row svg, .clip svg, .disc, .add { color: #566f7d; }
.rowlist, .slots { position: relative; flex: 1; }
.row { display: flex; height: 53px; border-bottom: 1px solid #abbcc6; background: #a2b5bf; }
.row em { width: 58px; color: #7c9099; font-size: 20px; line-height: 54px; font-weight: 400; text-align: center; }
.row div { display: flex; flex: 1; align-items: center; padding-left: 3px; }
.row.on div, .line.on div { background: #9cadb8; }
.row svg, .clip svg { width: 45px; height: 45px; }
.row span, .clip span, .name span { flex: 1; text-align: center; }
.rows .add { width: 100%; height: 52px; }
.add svg { width: 46px; height: 46px; }

.matrix { border-radius: 0 0 28px 28px; }
.cols { display: grid; grid-template-columns: repeat(7, minmax(0, 1fr)); }
.col { display: flex; flex-direction: column; border-right: 2px solid #a9bbc4; background: #a2b5bf; }
.col.on { border-radius: 28px 0 0; }
.top { display: flex; align-items: center; gap: 16px; height: 53px; padding: 0 7px 0 20px; color: #2f4d5a; font-size: 20px; font-weight: 700; }
.top em { flex: 1; color: #7c9099; font-weight: 400; }
.top button { width: 36px; height: 36px; border-radius: 4px; background: #9db3c0; }
.top svg { width: 28px; height: 28px; }
.name { display: flex; flex: 1; align-items: center; padding: 2px 0 0 13px; }
.name span { padding-left: 14px; white-space: nowrap; }
.col.on .name { background: #9cadb8; }
.line { display: grid; grid-template-columns: repeat(7, minmax(0, 1fr)); height: 53px; }
.line div { display: flex; align-items: center; border-right: 2px solid #a9bbc4; border-bottom: 1px solid #abbcc6; background: #a2b5bf; }
.line .void { background: #9cadb8; }
.line .clip { padding: 0 4px; background: #88aca4; color: #2f4248; }
.line.on .clip { background: #789b95; }
.clip b { width: 28px; height: 28px; border-radius: 50%; background: #94b5ae; font-size: 20px; font-weight: 600; text-align: center; }
.disc { width: 29px; height: 29px; margin-left: 10px; border-radius: 50%; background: currentColor; }
.hint { position: absolute; right: 38px; top: 50%; width: 66px; height: 58px; margin-top: -29px; color: #95aab7; }

/* inspector */
.inspector { position: relative; background: #8bc9fa; color: #3b7eb5; }
.sheet { height: 100%; padding: 1px 16px 0; border-radius: 28px 0 0; background: #83c2f3; }
.sheet h2 { height: 46px; color: #1a5888; line-height: 46px; text-align: center; }
.rule { display: flex; align-items: center; gap: 26px; height: 30px; font-size: 21px; }
.rule::before, .rule::after { content: ""; flex: 1; height: 2px; background: currentColor; opacity: .35; }
.rule span { display: flex; align-items: center; gap: 8px; opacity: .8; }
.rule svg { width: 18px; height: 18px; }
.field { display: flex; align-items: center; gap: 16px; height: 67px; white-space: nowrap; }
.field.low { height: 54px; }
.field.tall { height: 76px; }
.field.list { height: 61px; }
.field b, .field [type="checkbox"], .swatch { margin-left: auto; }
.field b { margin-right: 8px; color: #145586; font-weight: 600; }
.field b.mid { margin-right: 25px; }
.field b.far { margin-right: 35px; }
.field output, .field select, .field [type="text"] { color: #1a5888; }
.field [type="text"] { flex: 1; min-width: 0; height: 52px; padding: 0 9px; border-radius: 26px; background: #7bbcef; }
.field [type="checkbox"] { display: grid; place-items: center; width: 36px; height: 36px; margin-right: 22px; border-radius: 4px; background: #1a7dbf; }
.field [type="checkbox"]::before { content: ""; width: 28px; height: 20px; background: #8ac6f5; clip-path: polygon(0 50%, 9% 38%, 36% 76%, 91% 0, 100% 13%, 36% 100%); }
.field .sel { flex: 1; height: 44px; background: #80bff2; color: #1a5888; }
.swatch { width: 48px; height: 48px; margin-right: 6px; border: 3px solid #1a5888; border-radius: 50%; }

/* master */
.master {
  --ring: #ea9791;
  --disc: #e19392;
  --needle: #83302c;
  --rail: #db867f;
  position: relative;
  display: flex;
  flex-direction: column;
  align-items: center;
  background: linear-gradient(#f39f97 52px, #ed9b93 0);
  color: #83302c;
}
.master h2 { width: 100%; height: 52px; border-radius: 0 28px 0 0; background: #e99893; line-height: 54px; text-align: center; }
.master .knob { margin-top: 2px; }
.fx { display: flex; align-items: center; justify-content: space-around; height: 32px; }
.fx svg { width: 22px; height: 22px; }
.fx .note { width: 30px; height: 30px; }
.master .fx { width: 100%; margin-top: 15px; padding: 0 10px 0 6px; color: #a55450; }
.fx button { font-weight: 400; }
.db { font-size: 20px; font-weight: 600; line-height: 28px; white-space: nowrap; }
.master .db { margin-top: 8px; }
.strip { display: grid; }
.master .strip { grid-template-columns: 130px 77px 1fr; flex: 1; width: 100%; padding: 6px 0 14px; }
.master .keys { display: flex; align-items: center; justify-content: center; padding: 0 0 28px; }
.scale {
  display: grid;
  grid-template-rows: 146fr 138fr 123fr 109fr 172fr 114fr 198fr 0;
  margin: 11px 0;
  list-style: none;
  font-size: 15px;
}
.scale li { display: flex; align-items: center; justify-content: flex-end; gap: 10px; height: 0; white-space: nowrap; }
.scale li::after { content: ""; width: 20px; height: 2px; background: var(--rail); }
[type="range"] {
  width: 32px;
  height: 100%;
  writing-mode: vertical-lr;
  direction: rtl;
  background: linear-gradient(var(--rail), var(--rail)) 0 50% / 8px calc(100% - 22px) no-repeat;
}
[type="range"]::-webkit-slider-thumb {
  appearance: none;
  width: 21px;
  height: 22px;
  margin-left: 14px;
  background: var(--thumb, #a55450);
  clip-path: polygon(100% 0, 100% 100%, 0 50%);
}

/* tracks */
.tracks {
  --ring: #f0c077;
  --disc: #e6bf78;
  --needle: #8b5a0f;
  --rail: #dfae63;
  --thumb: #a87d37;
  position: relative;
  display: grid;
  grid-template-columns: repeat(7, minmax(0, 1fr));
  background: #fcc87d;
  color: #8b5a0f;
}
.track { display: flex; flex-direction: column; padding: 0 8px; border-right: 2px solid #fac77c; background: #f4c379; }
.track h2 { display: flex; align-items: center; height: 59px; margin: 0 -8px 10px; padding: 2px 6px 0 10px; background: #dcc268; color: #824c02; }
.track h2 span { flex: 1; margin-left: 2px; text-align: center; }
.plug { width: 38px; height: 38px; color: #a87d37; }
.c1 h2, .c1 { border-radius: 28px 0 0; }
.c2 h2 { background: #dbc06b; }
.c3 h2 { background: #dbc072; }
.c4 h2 { background: #dabe7b; }
.c5 h2 { background: #dabe7b; }
.c6 h2 { background: #e1b67e; }
.track .rule { color: #b5853c; }
.track .sel { height: 38px; background: #f1c077; font-size: 22px; }
.src .k { grid-row: 1; grid-column: 1; width: 18px; height: 18px; margin-left: 9px; }
.track .src select { padding: 0 10px 0 0; text-align: center; text-align-last: center; }
.sel.src > svg:last-child, .chan .sel > svg:last-child { margin-left: 4px; }
.chan { display: grid; grid-template-columns: 115px 1fr 115px; align-items: center; justify-items: center; height: 38px; margin: 13px 0; }
.chan .sel { width: 100%; }
.to { width: 16px; height: 14px; }
.cut select { -webkit-mask-image: linear-gradient(90deg, #000 40px, transparent 70px); mask-image: linear-gradient(90deg, #000 40px, transparent 70px); }
.mon { display: grid; grid-template-columns: 64px 1fr 64px; width: 220px; height: 38px; margin: 0 auto 14px; border: 2px solid #c4944b; border-radius: 19px; overflow: hidden; }
.mon svg { width: 34px; height: 34px; color: #a87d37; }
.mon .on { border: solid #c4944b; border-width: 0 2px; background: #e7bf78; font-size: 24px; font-weight: 400; }
.pan { display: grid; grid-template-columns: 1fr 72px 1fr; align-items: start; height: 70px; }
.pan .knob { grid-column: 2; grid-row: 1; margin-top: -1px; }
.pdc { grid-column: 1; grid-row: 1; width: 58px; height: 32px; margin: 14px 0 0 13px; border-radius: 10px; font-size: 20px; }
.pdc.warn { background: #f9c23e; color: #6f4703; }
.pdc.alert { background: #fb8e41; color: #fdcf7f; }
.track .fx { margin-top: 3px; padding-right: 4px; color: #a87d37; }
.track .fx .live { color: #727f43; font-weight: 700; }
.track .strip { grid-template: 42px 1fr / 75px 53px 1fr; flex: 1; padding-bottom: 14px; }
.track .keys { display: flex; flex-direction: column; grid-row: 1 / 3; align-items: center; gap: 26px; padding-top: 23px; }
.keys button { width: 36px; height: 36px; font-size: 22px; font-weight: 400; }
.keys svg { width: 36px; height: 36px; }
.track .db { grid-column: 2 / 4; margin-left: -24px; padding: 8px 50px 0 0; text-align: center; line-height: 28px; }
.track .scale { grid-column: 2; grid-row: 2; }
.track [type="range"] { grid-column: 3; grid-row: 2; }
.tracks .add { color: #ad8039; }

/* info */
.info { position: relative; background: #fbdd82; color: #a68d32; }
.card { height: 100%; padding: 0 16px; border-radius: 28px 0 0; background: #f0d87e; }
.tabs { display: grid; grid-template-columns: 1fr 1fr; justify-items: center; height: 60px; border-bottom: 2px solid #dec76c; }
.tabs button { height: 60px; border-bottom: 6px solid transparent; }
.tabs .on { border-bottom-color: currentColor; border-radius: 3px 3px 0 0; color: #84954a; }
table { width: 100%; border-collapse: collapse; }
th, td { height: 52px; font-weight: 500; text-align: left; white-space: nowrap; }
td { color: #8a7014; text-align: right; }
```
